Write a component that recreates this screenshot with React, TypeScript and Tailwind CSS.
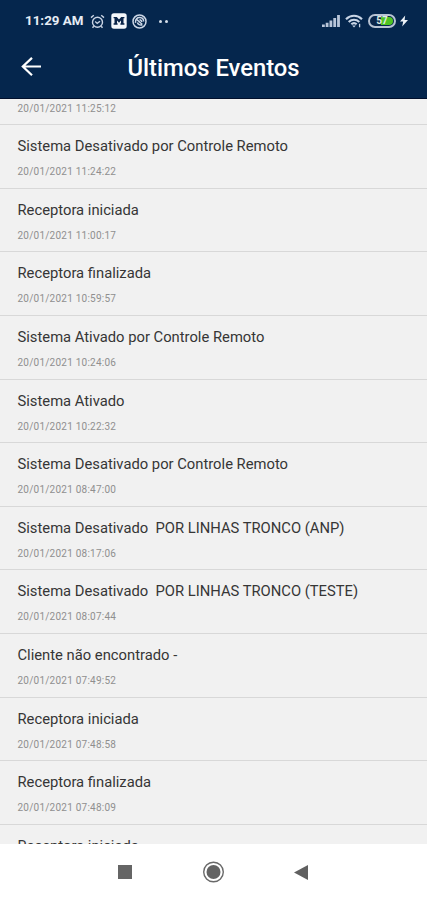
type EventItem = {
  title?: string
  date?: string
}

// the list is scrolled, so the first and last rows are only partly in view
const events: EventItem[] = [
  { date: '20/01/2021 11:25:12' },
  { title: 'Sistema Desativado por Controle Remoto', date: '20/01/2021 11:24:22' },
  { title: 'Receptora iniciada', date: '20/01/2021 11:00:17' },
  { title: 'Receptora finalizada', date: '20/01/2021 10:59:57' },
  { title: 'Sistema Ativado por Controle Remoto', date: '20/01/2021 10:24:06' },
  { title: 'Sistema Ativado', date: '20/01/2021 10:22:32' },
  { title: 'Sistema Desativado por Controle Remoto', date: '20/01/2021 08:47:00' },
  { title: 'Sistema Desativado  POR LINHAS TRONCO (ANP)', date: '20/01/2021 08:17:06' },
  { title: 'Sistema Desativado  POR LINHAS TRONCO (TESTE)', date: '20/01/2021 08:07:44' },
  { title: 'Cliente não encontrado -', date: '20/01/2021 07:49:52' },
  { title: 'Receptora iniciada', date: '20/01/2021 07:48:58' },
  { title: 'Receptora finalizada', date: '20/01/2021 07:48:09' },
  { title: 'Receptora iniciada' },
]

function AlarmIcon() {
  return (
    <svg className="h-[15px] w-[15px]" viewBox="0 0 15 15" fill="none" stroke="#c9d3e4" strokeWidth="1.4" aria-hidden>
      <circle cx="7.5" cy="8.2" r="5" />
      <path d="M1 3.6 3.8 1.3M14 3.6 11.2 1.3M3.8 12.2l-1.3 1.6M11.2 12.2l1.3 1.6M5.2 7.6l2 1.8 2.8-2.2" />
    </svg>
  )
}

function MailAppIcon() {
  return (
    <svg className="h-4 w-4" viewBox="0 0 16 16" aria-hidden>
      <rect x="0.3" y="0.3" width="15.4" height="15.4" rx="2.6" fill="#f4f7fb" />
      <path d="M2.6 4h3.2L8 6.6 10.2 4h3.2v1.3h-.9v5h.9v1.5H9.4v-1.5h.6V7.6l-2 2.2-2-2.2v2.7h.6v1.5h-4v-1.5h.9v-5h-.9z" fill="#0a2449" />
    </svg>
  )
}

function SyncAppIcon() {
  return (
    <svg className="h-[15px] w-[15px]" viewBox="0 0 15 15" fill="none" stroke="#cdd7e6" aria-hidden>
      <circle cx="7.5" cy="7.5" r="6.5" strokeWidth="1.5" />
      <path d="M3.5 8.8C3 5.2 5.4 3.4 8 3.6c2.4.2 3.6 1.8 3.6 3.8M4.8 5.5l5.6 5M5.4 8.5c.4 2 2.8 3 5 2.2M7.5 5.8c1.5 0 2.3.9 2.2 2.2" strokeWidth="1.5" />
    </svg>
  )
}

function SignalIcon() {
  return (
    <svg className="h-3 w-[18px]" viewBox="0 0 18 12" fill="#b9c6da" aria-hidden>
      <path d="M0 9.5h2.8V12H0zM3.7 7.8h2.8V12H3.7zM7.5 5.6h2.8V12H7.5zM11.3 3h2.8v9h-2.8zM15.1 0h2.8v12h-2.8z" />
    </svg>
  )
}

function WifiIcon() {
  return (
    <svg className="h-[14px] w-[18px]" viewBox="0 0 18 14" fill="none" stroke="#c9d5e6" strokeWidth="2.1" aria-hidden>
      <path d="M1 5.2C5.6.6 12.4.6 17 5.2M3.7 7.9c3-2.9 7.6-2.9 10.6 0M6.3 10.3c1.6-1.5 3.8-1.5 5.4 0" />
      <path d="M7.2 11.4h3.6L9 13.4z" fill="#c9d5e6" stroke="none" />
      <path d="M14.6 9.8v3.5" strokeWidth="1.3" />
    </svg>
  )
}

function Battery() {
  return (
    <div className="flex h-[14px] w-[28px] items-center rounded-full border-2 border-[#b9c4d4] p-px">
      <div className="flex h-full w-full items-center justify-center rounded-full bg-linear-to-r from-[#0b264b] from-45% to-[#4fc322] to-45%">
        <span className="text-[10px] leading-none font-bold text-[#dcebe0]">57</span>
      </div>
    </div>
  )
}

function StatusBar() {
  return (
    <div className="flex h-[42px] items-center pr-[19px] pl-[25px]">
      <span className="w-[59px] text-[13.4px] leading-none font-bold whitespace-nowrap text-[#e6ecf5]">11:29 AM</span>
      <div className="ml-[6px] flex items-center gap-[5.5px]">
        <AlarmIcon />
        <MailAppIcon />
        <SyncAppIcon />
      </div>
      <div className="ml-[12px] flex gap-[3px]">
        <span className="size-[3px] rounded-full bg-[#d5deea]" />
        <span className="size-[3px] rounded-full bg-[#d5deea]" />
      </div>
      <div className="ml-auto flex items-center">
        <SignalIcon />
        <div className="ml-[5px] flex">
          <WifiIcon />
        </div>
        <div className="ml-[5px]">
          <Battery />
        </div>
        <svg className="ml-[4px] h-[12px] w-[8px]" viewBox="0 0 8 11" fill="#eef3f9" aria-hidden>
          <path d="M5.2 0 0 6h3.2L2.2 11 8 4.6H4.6z" />
        </svg>
      </div>
    </div>
  )
}

function Header() {
  return (
    <header className="h-[99px] shrink-0 border-b border-[#010f2c] bg-[#05264d]">
      <StatusBar />
      <div className="grid h-[50px] grid-cols-[60px_1fr_60px] items-center">
        <button type="button" className="pl-[21px]" aria-label="Voltar">
          <svg className="h-5 w-5" viewBox="0 0 20 20" fill="none" stroke="#fff" strokeWidth="2.2" aria-hidden>
            <path d="M20 9.5H1.8M11 .9 1.8 9.5l9.2 8.8" />
          </svg>
        </button>
        <h1 className="pt-px text-center text-[23.8px] leading-8 font-medium text-white">Últimos Eventos</h1>
      </div>
    </header>
  )
}

function EventRow({ title, date }: EventItem) {
  return (
    <li className="h-[63.6px] shrink-0 border-b-[1.5px] border-[#d8d8d8] pt-[11px] pl-[17.5px]">
      <p className="h-5 text-[14.77px] leading-5 whitespace-pre text-[#363636]">{title}</p>
      {date && <p className="mt-[9px] text-[10px] leading-[14px] tracking-[0.23px] text-[#8f8f8f]">{date}</p>}
    </li>
  )
}

function NavigationBar() {
  return (
    <nav className="flex h-14 shrink-0 items-center justify-between bg-white pr-[119px] pl-[118px]">
      <span className="size-[14px] bg-[#656565]" />
      <svg className="h-[22px] w-[22px]" viewBox="0 0 22 22" aria-hidden>
        <circle cx="11.5" cy="11" r="9.8" fill="none" stroke="#696969" strokeWidth="1.4" />
        <circle cx="11.5" cy="11" r="7" fill="#636363" />
      </svg>
      <svg className="h-[15px] w-[14px]" viewBox="0 0 14 15" fill="#606060" aria-hidden>
        <path d="M14 0v15L0 7.5z" />
      </svg>
    </nav>
  )
}

export default function App() {
  return (
    <div className="flex h-[900px] w-[427px] flex-col overflow-hidden bg-[#f1f1f1] font-[Roboto,sans-serif]">
      <Header />
      <main className="min-h-0 flex-1 overflow-hidden">
        <ul className="-mt-[37.3px] flex flex-col">
          {events.map((event, i) => (
            <EventRow key={i} title={event.title} date={event.date} />
          ))}
        </ul>
      </main>
      <NavigationBar />
    </div>
  )
}
